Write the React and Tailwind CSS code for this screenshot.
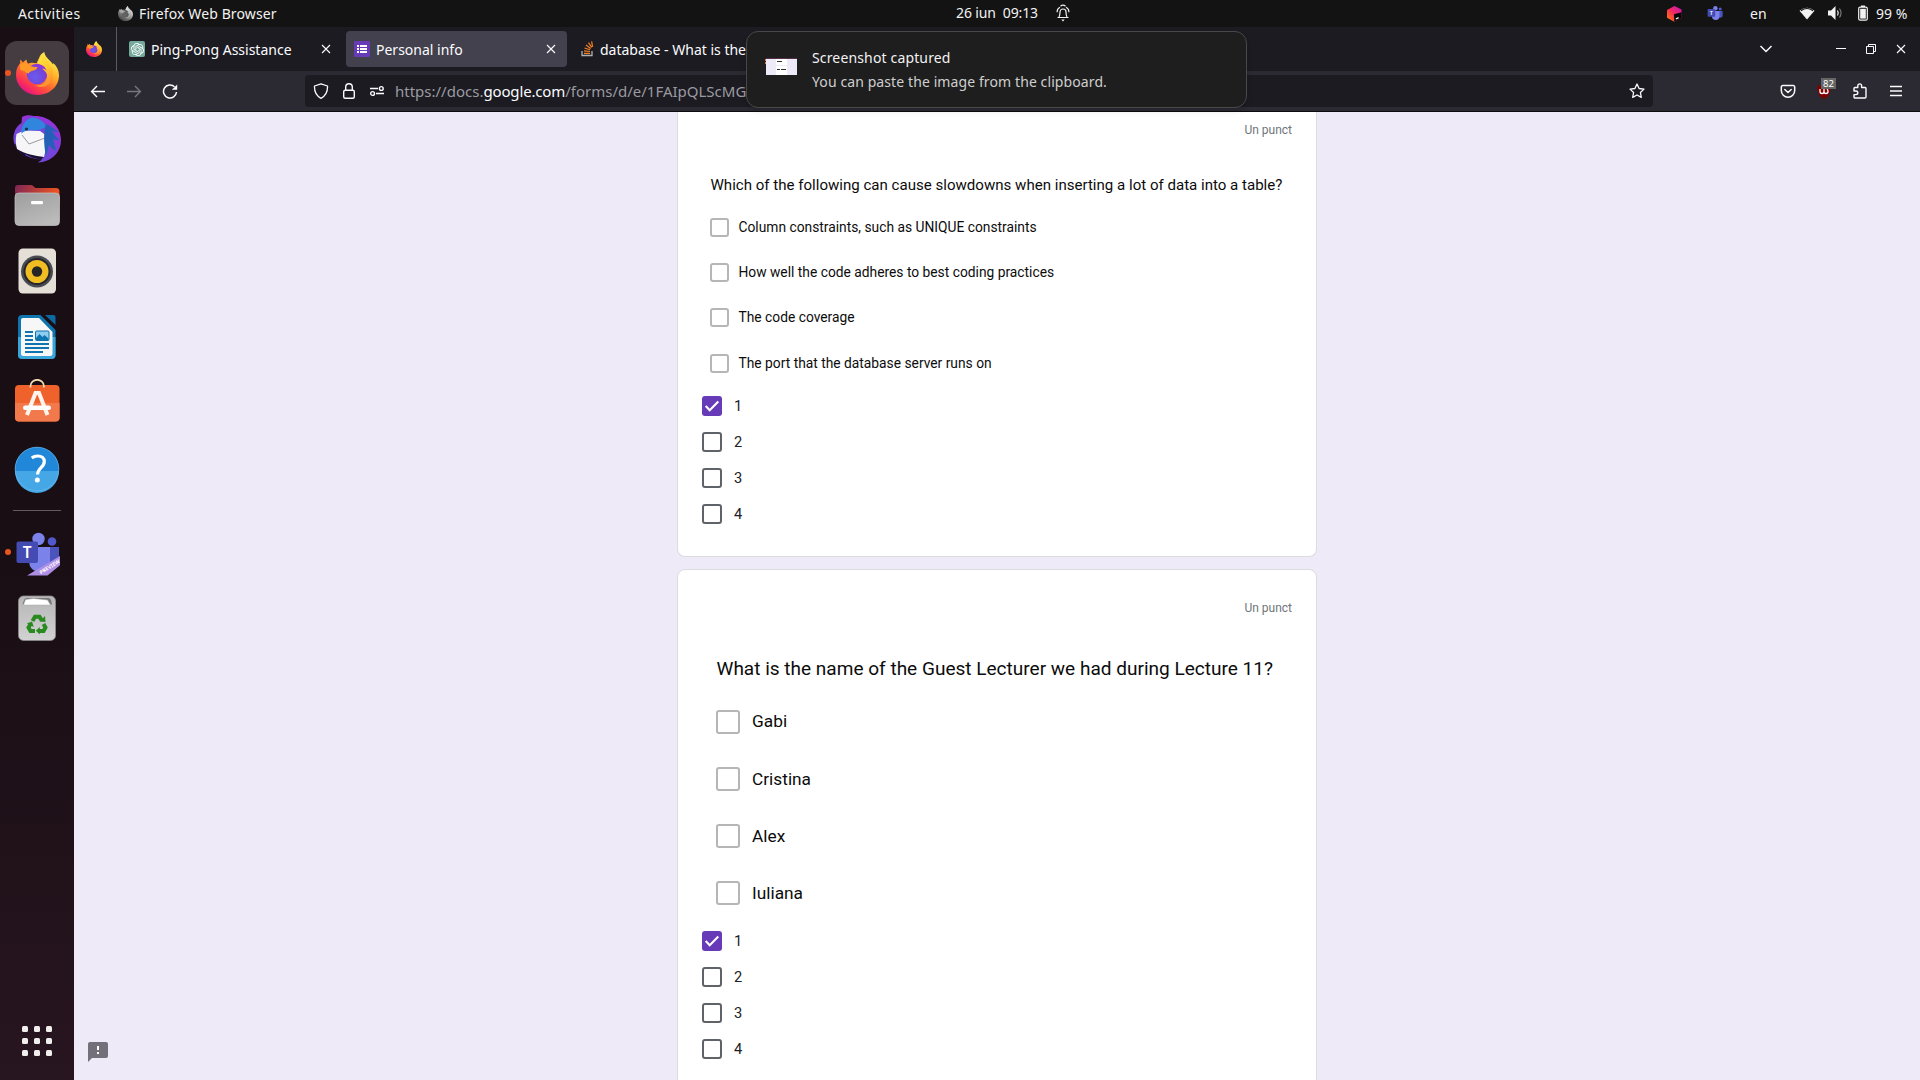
import React from "react";
import { SiOpenai } from "react-icons/si";

function FirefoxIcon({ className, id }) {
  return (
    <svg viewBox="0 0 48 48" className={className}>
      <defs>
        <linearGradient id={id + "a"} x1="0.85" y1="0.1" x2="0.25" y2="0.95">
          <stop offset="0" stopColor="#fff44f" />
          <stop offset="0.35" stopColor="#ffb02a" />
          <stop offset="0.6" stopColor="#ff6a2e" />
          <stop offset="0.85" stopColor="#fb2f57" />
          <stop offset="1" stopColor="#e31587" />
        </linearGradient>
        <radialGradient id={id + "b"} cx="0.4" cy="0.65" r="0.75">
          <stop offset="0" stopColor="#6a5cf0" />
          <stop offset="0.6" stopColor="#7544d8" />
          <stop offset="1" stopColor="#a62bd6" />
        </radialGradient>
        <linearGradient id={id + "c"} x1="0" y1="0" x2="0.4" y2="1">
          <stop offset="0" stopColor="#fff04a" />
          <stop offset="0.6" stopColor="#ffc52c" />
          <stop offset="1" stopColor="#ff9430" />
        </linearGradient>
      </defs>
      <path d="M24 48C10.500 48 0 37.800 0 25.500c0-6 1.500-9.500 4.500-13l.3-4c1.300 1 2.200 2.200 2.900 3.200 1.500-1.500 2.800-2.500 4-3.200.2 2 .8 3.400 1.800 4.500C16 11.500 20 11.800 23 12.500L27 4c1.200-1.800 2.700-3.200 4.600-4 .4 3.500 2.400 6.200 5.400 8.800 1.800 1.700 3.300 3.300 4.400 5.200l.2-1.600C45.500 16 48 20.500 48 26c0 12.500-10.500 22-24 22z" fill={"url(#" + id + "a)"} />
      <circle cx="23.500" cy="24.500" r="11.500" fill={"url(#" + id + "b)"} />
      <path d="M24 13c5 .4 9.500 3 10.500 8-2-2-4-2.500-5.500-2.200 4 2.200 7.500 7 5.200 12.500-2.200 5.200-8 7.200-13.500 5.500C30 42 39.500 37 41 27c.8-5.500-1.500-10.500-6-14.500-3-2.700-4.500-6-4.400-9.500C27 5.500 25 9 24 13z" fill={"url(#" + id + "c)"} />
      <path d="M4.500 14c3-2 7-2 9.500.5 2 1.700 5 2.200 9.800 2.300.2 2.200-2.300 3.500-5.300 4.200-2 .5-3.500 1.300-4.500 3C11.500 23.500 10 22.500 9.500 21c-2 0-4-.5-5-1.500z" fill="#ff9a26" />
    </svg>
  );
}

function TeamsIcon({ className, preview }) {
  return (
    <svg viewBox="0 0 48 48" className={className}>
      <circle cx="40" cy="11.500" r="4.300" fill="#5059c9" />
      <path d="M36 17h11v13a6 6 0 0 1-11 3z" fill="#4b53bc" />
      <circle cx="26.500" cy="9" r="6.200" fill="#7b83eb" />
      <path d="M17 17h21v14.500a10.500 10.500 0 0 1-21 0z" fill="#7b83eb" />
      {preview && <path d="M15 45.500L49.500 25v9L35.500 45.500z" fill="#ae8de4" />}
      {preview && (
        <text x="0" y="0" transform="translate(29 44.500) rotate(-32)" fontSize="5.200" fontWeight="700" fill="#fff" fontFamily="Noto Sans, sans-serif">PREVIEW</text>
      )}
      <rect x="4.500" y="11.500" width="21.500" height="21.500" rx="2" fill="#444bb3" />
      <text x="15.200" y="28" textAnchor="middle" fontSize="15.500" fontWeight="600" fill="#fff" fontFamily="Noto Sans, sans-serif">T</text>
    </svg>
  );
}

const ThunderbirdIcon = () => (
  <svg viewBox="0 0 48 48" className="size-12">
    <defs>
      <linearGradient id="tb" x1="0" y1="0" x2="1" y2="1">
        <stop offset="0" stopColor="#3a9ae4" />
        <stop offset="0.5" stopColor="#256fc4" />
        <stop offset="1" stopColor="#2e5fc0" />
      </linearGradient>
    </defs>
    <path d="M9 2c3-2 8-2.300 11.500-1C34 0 48 10 48 25c0 12-9 22-23.500 22.500l5-3C14 44 2 36 .5 25 0 18 3 11 8.500 8z" fill="url(#tb)" />
    <path d="M2 29c1.500 7 6 12 12 14l-2-4c5 3 10 5 16 5.500l3-2.500z" fill="#1a1030" />
    <path d="M3.500 19L11 15.500 27 16l7 5c-1 8-1 14-3 21C22 41 12 39 4 34 2.500 29 2.500 24 3.500 19z" fill="#f6f6f8" />
    <path d="M9 20l7 9 16-6" fill="none" stroke="#9a9aa2" strokeWidth="1" />
    <path d="M8.500 19c-.5-7 3-15 11-16.500 8 1 12 5 13.500 9-5 4-10 4-14.500 3.500C14 15 10 16.500 8.500 19z" fill="#2f86dc" />
    <path d="M33 9c5 2 9 6 13 8-3 0-5-.5-7-1 2 4 5 7 8 9-3 0-5-.3-7-1 1 5 2 9 4 12-3-1-6-3-8-6l-3 12c-2-12-3-22 0-33z" fill="#2560b8" />
    <circle cx="13.500" cy="14" r="1.600" fill="#15324f" />
  </svg>
);

const FilesIcon = () => (
  <svg viewBox="0 0 48 48" className="size-12">
    <defs>
      <linearGradient id="fi" x1="0" y1="0" x2="1" y2="0.2">
        <stop offset="0" stopColor="#7e2655" />
        <stop offset="1" stopColor="#ee5420" />
      </linearGradient>
      <linearGradient id="fg" x1="0" y1="0" x2="0.500" y2="1">
        <stop offset="0" stopColor="#9d9d9d" />
        <stop offset="1" stopColor="#bababa" />
      </linearGradient>
    </defs>
    <path d="M2 7a3 3 0 0 1 3-3h13c1.500 0 2 .7 3 1.800S22.500 7 24 7h19a3.500 3.500 0 0 1 3.500 3.500V22H2z" fill="url(#fi)" />
    <rect x="2" y="12" width="44.500" height="32.500" rx="4" fill="url(#fg)" stroke="#c6c6c6" strokeWidth="0.700" />
    <rect x="18" y="20" width="12" height="3.200" rx="1.200" fill="#fff" />
  </svg>
);

const SpeakerIcon = () => (
  <svg viewBox="0 0 48 48" className="size-12">
    <rect x="5.500" y="1.500" width="37.500" height="45" rx="4.500" fill="#e4e0d8" />
    <circle cx="24" cy="24.500" r="16" fill="#4a4b52" />
    <circle cx="24" cy="24.500" r="13.500" fill="#25252c" />
    <circle cx="24" cy="24.500" r="11.500" fill="#f0bd22" />
    <circle cx="24" cy="24.500" r="5.200" fill="#262626" />
  </svg>
);

const WriterIcon = () => (
  <svg viewBox="0 0 48 48" className="size-12">
    <path d="M9 2h18.500L42.500 17v25a4 4 0 0 1-4 4H9a4 4 0 0 1-4-4V6a4 4 0 0 1 4-4z" fill="#0f75ae" />
    <path d="M5 24h37.500v18a4 4 0 0 1-4 4H9a4 4 0 0 1-4-4z" fill="#3aa5da" />
    <path d="M10 5h16l13.500 14v21.500a2.500 2.500 0 0 1-2.500 2.500H10.500A2.500 2.500 0 0 1 8 40.500V7a2 2 0 0 1 2-2z" fill="#f7f7f7" />
    <path d="M32 2h8.500a2 2 0 0 1 2 2v8z" fill="#0d6aa0" />
    <path d="M12 19h8M12 23h8M12 27h8M12 31h24M12 35h24M12 39h18" stroke="#0f75ae" strokeWidth="2" />
    <rect x="22.500" y="18" width="13.500" height="9.500" rx="1" fill="#8fcdf0" stroke="#0f75ae" strokeWidth="1" />
    <path d="M23 27v-2l3.500-4 3 3 2-2 4 3.500V27z" fill="#0f75ae" />
  </svg>
);

const SoftwareIcon = () => (
  <svg viewBox="0 3 48 48" className="size-12">
    <rect x="2" y="9" width="44.500" height="36.500" rx="4" fill="#f0622c" />
    <path d="M2 27h44.500v14.500a4 4 0 0 1-4 4H6a4 4 0 0 1-4-4z" fill="#f2794b" />
    <path d="M17.500 11.500V10a6.700 6.200 0 0 1 13.400 0v1.500" fill="none" stroke="#f4d9b0" strokeWidth="1.800" />
    <path d="M14 39l8.500-22h3.500L34.500 39" fill="none" stroke="#fff3ee" strokeWidth="4" />
    <rect x="10" y="29.500" width="28" height="4.500" rx="2.200" fill="#fff" />
  </svg>
);

const HelpIcon = () => (
  <svg viewBox="0 0 48 48" className="size-12">
    <circle cx="24" cy="24" r="22" fill="#2187d8" />
    <path d="M2 26a22 22 0 0 0 44 0z" fill="#45a7e6" />
    <circle cx="24" cy="24" r="21.800" fill="none" stroke="#69b7ec" strokeWidth="0.700" />
    <path d="M18.800 13c1.500-1.300 3.500-2 6-2 4 0 6.500 2.200 6.500 5.500 0 6-6.700 6.500-6.700 13" fill="none" stroke="#fff" strokeWidth="3.200" />
    <circle cx="24.300" cy="35" r="2.500" fill="#fff" />
  </svg>
);

const TrashIcon = () => (
  <svg viewBox="0 0 48 48" className="size-12">
    <defs>
      <linearGradient id="tr" x1="0" y1="0" x2="0" y2="1">
        <stop offset="0" stopColor="#b6b6b6" />
        <stop offset="1" stopColor="#d2d2d2" />
      </linearGradient>
    </defs>
    <rect x="5.500" y="2" width="37" height="44.500" rx="5" fill="url(#tr)" stroke="#8a8a8a" strokeWidth="0.800" />
    <path d="M9.500 10.500l1.500-4.500a3 3 0 0 1 3-2h21a3 3 0 0 1 3 2l1 4.500z" fill="#77777a" />
    <path d="M10.500 11l2-5.500 8-1 14 1.500 3 5z" fill="#fff" stroke="#aaa" strokeWidth="0.500" />
    <g fill="none" stroke="#2a8a20" strokeWidth="4">
      <path d="M19.500 27l2.500-4.200h4.500l2.300 3.500" />
      <path d="M30.500 30l2 3.500-2 3.500h-4.500" />
      <path d="M22 37h-4.500l-2-3.500 2.200-3.800" />
    </g>
    <path d="M26.500 27.500l6 .5-.5-6zM26.800 33v7.500l-4-3.700zM13.800 29.500l5.200-2 1.800 5.400z" fill="#2a8a20" />
  </svg>
);

function DockItem({ children, active, running }) {
  return (
    <div className="relative flex h-[66px] w-full items-center justify-center">
      {running && <span className="absolute left-[5px] top-[30px] size-[6px] rounded-full bg-[#e95420]" />}
      <div className={active ? "flex size-16 items-center justify-center rounded-[12px] bg-[#453c42]" : "flex size-16 items-center justify-center"}>{children}</div>
    </div>
  );
}

function Dock() {
  return (
    <aside className="flex w-[74px] shrink-0 flex-col bg-linear-to-b from-[#190e14] from-50% to-[#27151f] pt-[13px]">
      <DockItem active running><FirefoxIcon id="d" className="h-[43px] w-[43px]" /></DockItem>
      <DockItem><ThunderbirdIcon /></DockItem>
      <DockItem><FilesIcon /></DockItem>
      <DockItem><SpeakerIcon /></DockItem>
      <DockItem><WriterIcon /></DockItem>
      <DockItem><SoftwareIcon /></DockItem>
      <DockItem><HelpIcon /></DockItem>
      <div className="flex h-[17px] items-center justify-center"><div className="h-px w-12 bg-[#625b60]" /></div>
      <DockItem running><TeamsIcon preview className="mt-1 mr-[3px] size-12" /></DockItem>
      <DockItem><TrashIcon /></DockItem>
      <div className="mt-auto mb-[24px] ml-[22px] grid w-[30px] grid-cols-3 gap-[6px]">
        {[0, 1, 2, 3, 4, 5, 6, 7, 8].map((i) => <span key={i} className="size-[6px] rounded-[1.5px] bg-[#f0efee]" />)}
      </div>
    </aside>
  );
}

function TopBar() {
  return (
    <header className="relative flex h-[27px] shrink-0 items-center bg-[#131313] text-[14px] text-[#f2f2f2]">
      <span className="ml-[18px] w-[100px] tracking-[0.42px]">Activities</span>
      <FirefoxIcon id="t" className="mb-px size-[15px] grayscale" />
      <span className="ml-[6px] tracking-[0.12px]">Firefox Web Browser</span>
      <div className="absolute left-[956px] top-0 flex h-[25px] items-center">
        <span className="w-[99px] whitespace-pre tracking-[-0.13px]">26 iun  09:13</span>
        <svg viewBox="0 0 16 18" className="h-[18px] w-4" fill="none" stroke="#f2f2f2" strokeWidth="1.200">
          <path d="M2.500 13.500h11M4 13c.8-1.500 1-3 1-5a3 3 0 0 1 6 0c0 2 .2 3.500 1 5M5 3.200a5 5 0 0 0-2.800 5M11 3.200a5 5 0 0 1 2.800 5M5.500 2.200a4 4 0 0 1 5 0" />
          <path d="M6.300 15.500h3.400L8 17.500z" fill="#f2f2f2" stroke="none" />
        </svg>
      </div>
      <div className="ml-auto flex h-full items-center">
        <svg viewBox="0 0 15 16" className="mr-[24px] h-4 w-[15px]">
          <defs><linearGradient id="jb" x1="0" y1="1" x2="1" y2="0"><stop offset="0.150" stopColor="#ff6a1a" /><stop offset="0.500" stopColor="#f52a5c" /><stop offset="1" stopColor="#c412c8" /></linearGradient></defs>
          <path d="M7.500 0L14.500 3.600v8.200l-7.200 4L0 11.800V4z" fill="url(#jb)" />
          <path d="M7 8.200l7.500-2v5.600l-7.200 4z" fill="#050505" />
          <path d="M8.800 13l2.800-1.400" stroke="#fff" strokeWidth="1.200" />
        </svg>
        <TeamsIcon className="mr-[27px] mb-px size-[17px]" />
        <span className="w-[49px]">en</span>
        <svg viewBox="0 0 16 13" className="h-[13px] w-4">
          <path d="M0.500 3.800Q8-2.400 15.500 3.800L8 12.500z" fill="#f2f2f2" />
          <path d="M2 3.700Q8-.6 14 3.700" fill="none" stroke="#131313" strokeWidth="1.100" />
        </svg>
        <svg viewBox="0 0 16 16" className="ml-[13px] mb-px size-4">
          <path d="M0 5.500h3L7.500 1v14L3 10.500H0z" fill="#f2f2f2" />
          <path d="M9.500 5.500q1.500 2.500 0 5" fill="none" stroke="#f2f2f2" strokeWidth="1.200" />
          <path d="M11.500 3.500q3 4.500 0 9" fill="none" stroke="#777" strokeWidth="1.200" />
        </svg>
        <svg viewBox="0 0 10 16" className="ml-[14px] mb-[2px] h-4 w-[10px]">
          <path d="M3 .5h4V2H3z" fill="#f2f2f2" />
          <rect x="0.700" y="2.200" width="8.600" height="13" rx="1.500" fill="none" stroke="#f2f2f2" strokeWidth="1.200" />
          <rect x="2.200" y="3.800" width="5.600" height="9.800" fill="#f2f2f2" />
        </svg>
        <span className="ml-[8px] w-[44px]">99 %</span>
      </div>
    </header>
  );
}

function Cross() {
  return <svg viewBox="0 0 10 10" className="size-[10px]" fill="none" stroke="#fbfbfe" strokeWidth="1.100"><path d="M1 1l8 8M9 1L1 9" /></svg>;
}

function TabBar() {
  return (
    <div className="flex h-[44px] shrink-0 items-center bg-[#1c1b22] text-[14px] text-[#fbfbfe]">
      <FirefoxIcon id="p" className="ml-[12px] size-4" />
      <div className="ml-[14px] h-full w-px bg-[#5b5a62]" />
      <div className="ml-[12px] flex w-[217px] items-center">
        <span className="flex size-4 items-center justify-center rounded-[2px] bg-[#74aa9c] text-white"><SiOpenai size={13} /></span>
        <span className="mt-px ml-[6px] w-[170px]">Ping-Pong Assistance</span>
        <Cross />
      </div>
      <div className="flex h-9 w-[221px] items-center rounded-[4px] bg-[#42414d] pl-2">
        <svg viewBox="0 0 16 16" className="size-4">
          <rect width="16" height="16" rx="1" fill="#673ab7" />
          <path d="M3 4h2v2H3zM6 4h7v2H6zM3 7h2v2H3zM6 7h7v2H6zM3 10h2v2H3zM6 10h7v2H6z" fill="#fff" />
        </svg>
        <span className="mt-px ml-[6px] w-[170px]">Personal info</span>
        <Cross />
      </div>
      <svg viewBox="0 0 13 16" className="ml-[14px] h-4 w-[13px]" fill="none">
        <path d="M1 10v4.500h10V10" stroke="#b0b0b0" strokeWidth="1.300" />
        <path d="M3 12.300h6M3 9.800l6 .7M3.500 7l5.600 1.800M5 4l4.700 3.500M7.500 1.600l3.200 4.700M10.600.3l1 5.600" stroke="#f48024" strokeWidth="1.200" />
      </svg>
      <span className="mt-px ml-[6px] whitespace-nowrap">database - What is the</span>
      <div className="ml-auto flex items-center text-[#fbfbfe]">
        <svg viewBox="0 0 14 8" className="mr-[63px] h-2 w-[14px]" fill="none" stroke="currentColor" strokeWidth="1.500"><path d="M1.500 1L7 6.500 12.500 1" /></svg>
        <svg viewBox="0 0 10 10" className="mr-[20px] size-[10px]"><path d="M0 4h10v1H0z" fill="currentColor" /></svg>
        <svg viewBox="0 0 10 10" className="mr-[20px] size-[10px]" fill="none" stroke="currentColor"><path d="M.5 2.500h7v7h-7zM2.500 2.500v-2h7v7h-2" /></svg>
        <div className="mr-[14px]"><Cross /></div>
      </div>
    </div>
  );
}

function Toolbar() {
  return (
    <div className="flex h-[41px] shrink-0 items-center border-b border-[#0c0c0d] bg-[#2b2a33] text-[#fbfbfe]">
      <svg viewBox="0 0 16 16" className="ml-[16px] size-4 shrink-0" fill="none" stroke="currentColor" strokeWidth="1.400"><path d="M15 8.500H2M7 3L1.600 8.500 7 14" /></svg>
      <svg viewBox="0 0 16 16" className="ml-[20px] size-4 shrink-0 text-[#77767e]" fill="none" stroke="currentColor" strokeWidth="1.400"><path d="M1 8.500h13M9 3l5.400 5.500L9 14" /></svg>
      <svg viewBox="0 0 16 16" className="ml-[20px] size-4 shrink-0" fill="none" stroke="currentColor" strokeWidth="1.500"><path d="M14.500 9A6.500 6.500 0 1 1 12.500 3.800" /><path d="M15.200 1.500v5.300H9.900z" fill="currentColor" stroke="none" /></svg>
      <div className="ml-[127px] flex h-8 w-[1348px] shrink-0 items-center rounded-[4px] bg-[#1c1b22] pl-2">
        <svg viewBox="0 0 16 16" className="size-4" fill="none" stroke="currentColor" strokeWidth="1.300"><path d="M8 .8L14.500 3c.3 5.500-1.500 9.800-6.500 12.300C3 12.800 1.200 8.500 1.500 3z" strokeLinejoin="round" /></svg>
        <svg viewBox="0 0 16 16" className="ml-[12px] size-4" fill="none" stroke="currentColor" strokeWidth="1.400"><rect x="2.700" y="7.200" width="10.600" height="8" rx="1.500" /><path d="M4.700 7V4a3.300 3.300 0 0 1 6.600 0v3" /></svg>
        <svg viewBox="0 0 16 16" className="ml-[12px] size-4" fill="none" stroke="currentColor" strokeWidth="1.400"><path d="M1 5.500h8M7 10.500h8" /><circle cx="12.300" cy="5.500" r="1.900" /><circle cx="3.600" cy="10.500" r="1.900" /></svg>
        <span className="ml-[10px] text-[15px] whitespace-nowrap text-[#9a9aa0]">https://docs.<span className="tracking-[-0.15px] text-[#fbfbfe]">google.com</span>/forms/d/e/1FAIpQLScMG</span>
        <svg viewBox="0 0 16 16" className="mr-2 ml-auto size-4" fill="none" stroke="currentColor" strokeWidth="1.300" strokeLinejoin="round"><path d="M8 1l2.100 4.500 4.900.6-3.600 3.400.9 4.900L8 12l-4.300 2.400.9-4.900L1 6.100l4.900-.6z" /></svg>
      </div>
      <div className="ml-auto flex items-center gap-5 pr-4">
        <svg viewBox="0 0 16 16" className="size-4" fill="none" stroke="currentColor" strokeWidth="1.500" strokeLinecap="round" strokeLinejoin="round"><path d="M2.800 2.500h10.400a1.500 1.500 0 0 1 1.500 1.500v3.500a6.700 6.700 0 0 1-13.400 0V4a1.500 1.500 0 0 1 1.500-1.500zM4.800 6.500L8 9.500l3.200-3" /></svg>
        <div className="relative size-4">
          <svg viewBox="0 0 16 16" className="size-4"><path d="M8 1l6.500 2c.5 5.500-1 10-6.500 13C2.500 13 1 8.500 1.500 3z" fill="#800000" /><path d="M4 6v2.500a2 2 0 0 0 4 0V6m0 2.500a2 2 0 0 0 4 0c0-1-.3-2-1-2.500" fill="none" stroke="#fff" strokeWidth="1.300" /></svg>
          <span className="absolute -top-[5px] left-[5px] h-[11px] w-[15px] bg-[#666] text-center text-[9.5px] leading-[11px] text-white">82</span>
        </div>
        <svg viewBox="0 0 16 16" className="size-4" fill="none" stroke="currentColor" strokeWidth="1.400" strokeLinejoin="round"><path d="M5.800 4.500V2.800a1.900 1.900 0 0 1 3.800 0v1.700H13a1 1 0 0 1 1 1V14a1 1 0 0 1-1 1H3a1 1 0 0 1-1-1v-2.400h2a1.600 1.600 0 0 0 0-3.600H2V5.500a1 1 0 0 1 1-1z" /></svg>
        <svg viewBox="0 0 16 16" className="size-4" stroke="currentColor" strokeWidth="1.300"><path d="M2 3.500h12M2 8h12M2 12.500h12" /></svg>
      </div>
    </div>
  );
}

function Notification() {
  return (
    <div className="absolute top-[31px] left-[746px] flex h-[77px] w-[501px] rounded-[12px] border border-[#484848] bg-[#1e1e1e] shadow-md">
      <svg viewBox="0 0 32 17" className="mt-[26px] ml-[18px] h-[17px] w-8">
        <path d="M0 0h32v17H0z" fill="#eeeaf8" />
        <path d="M0 0h32v1H0z" fill="#55304a" />
        <path d="M0 0h1v17H0z" fill="#241820" />
        <path d="M0 1h1v2H0zM0 4h1v2H0z" fill="#e07a4a" />
        <path d="M11 1h11v6H11zM11 8h11v9H11z" fill="#fff" />
        <path d="M12 3.500h5M12 11.500h3M16 11.500h5" stroke="#333" />
      </svg>
      <div className="ml-[15px] text-[14px]">
        <div className="mt-[16px] h-5 leading-5 tracking-[0.15px] text-[#f2f2f2]">Screenshot captured</div>
        <div className="mt-[4px] h-5 leading-5 tracking-[0.1px] whitespace-nowrap text-[#cfcfcf]">You can paste the image from the clipboard.</div>
      </div>
    </div>
  );
}

function Answers() {
  return ["1", "2", "3", "4"].map((n) => (
    <label key={n} className="ml-[24px] flex h-9 items-center text-[14.67px] text-[#202124]">
      {n === "1" ? (
        <span className="flex size-5 items-center justify-center rounded-[3px] bg-[#673ab7]">
          <svg viewBox="0 0 20 20" className="size-5" fill="none" stroke="#fff" strokeWidth="2.100"><path d="M3.700 10l4 4.200 8.600-8.800" /></svg>
        </span>
      ) : (
        <span className="size-5 rounded-[3px] border-2 border-[#5f6368]" />
      )}
      <span className="ml-[12px]">{n}</span>
    </label>
  ));
}

const first = ["Column constraints, such as UNIQUE constraints", "How well the code adheres to best coding practices", "The code coverage", "The port that the database server runs on"];
const second = ["Gabi", "Cristina", "Alex", "Iuliana"];

export default function App() {
  return (
    <div className="relative flex h-[1080px] w-[1920px] flex-col overflow-hidden font-['Noto_Sans',sans-serif]">
      <TopBar />
      <div className="flex min-h-0 flex-1">
        <Dock />
        <div className="flex min-w-0 flex-1 flex-col">
          <TabBar />
          <Toolbar />
          <main className="relative flex min-h-0 flex-1 flex-col items-center gap-3 overflow-hidden bg-[#eeeaf8] font-['Roboto',sans-serif] text-[#0c0c0c]">
            <section className="h-[445px] w-[640px] shrink-0 rounded-b-lg border border-t-0 border-[#dadce0] bg-white pt-[10px]">
              <div className="pr-6 text-right text-[12px] leading-4 text-[#70757a]">Un punct</div>
              <h2 className="mt-[37px] ml-[32.5px] text-[15.07px] leading-5 whitespace-nowrap">Which of the following can cause slowdowns when inserting a lot of data into a table?</h2>
              <div className="mt-[9.6px] mb-[2.2px]">
                {first.map((t) => (
                  <div key={t} className="ml-[32px] flex h-[45.3px] items-center text-[13.8px]">
                    <span className="size-[19px] rounded-[3px] border-2 border-[#b6b6b6]" />
                    <span className="ml-[9.5px]">{t}</span>
                  </div>
                ))}
              </div>
              <Answers />
            </section>
            <section className="h-[600px] w-[640px] shrink-0 rounded-t-lg border border-[#dadce0] bg-white pt-[30px]">
              <div className="pr-6 text-right text-[12px] leading-4 text-[#70757a]">Un punct</div>
              <h2 className="mt-[41px] ml-[38.5px] text-[19.04px] leading-6 whitespace-nowrap">What is the name of the Guest Lecturer we had during Lecture 11?</h2>
              <div className="mt-[12.6px] mb-[1px]">
                {second.map((t) => (
                  <div key={t} className="ml-[38px] flex h-[57.1px] items-center text-[17.3px]">
                    <span className="size-6 rounded-[3px] border-2 border-[#b6b6b6]" />
                    <span className="mt-[0.6px] ml-[12px]">{t}</span>
                  </div>
                ))}
              </div>
              <Answers />
            </section>
            <svg viewBox="0 0 20 20" className="absolute bottom-[18px] left-[14px] size-5">
              <path d="M2 0h16a2 2 0 0 1 2 2v12a2 2 0 0 1-2 2H4l-4 4V2a2 2 0 0 1 2-2z" fill="#737079" />
              <path d="M9 4h2v4H9zM9 10h2v2H9z" fill="#fff" />
            </svg>
          </main>
        </div>
      </div>
      <Notification />
    </div>
  );
}
